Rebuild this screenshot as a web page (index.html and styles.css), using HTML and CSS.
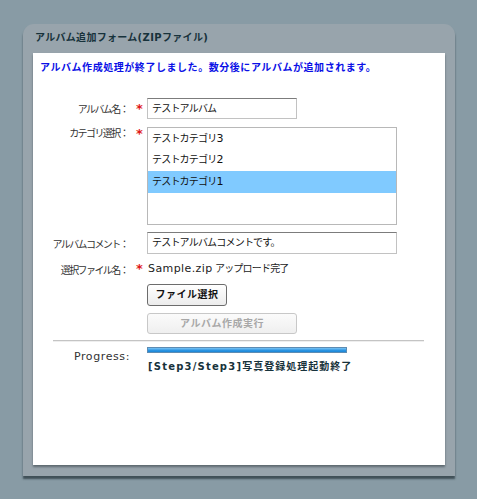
FILE: index.html
```html
<!DOCTYPE html>
<html lang="ja">
<head>
<meta charset="utf-8">
<link rel="stylesheet" href="styles.css">
</head>
<body>
<div class="panel">
  <div class="panel-title">アルバム追加フォーム(<span class="lat">ZIP</span>ファイル)</div>
  <div class="content">
    <div class="message">アルバム作成処理が終了しました。数分後にアルバムが追加されます。</div>
    <div class="form">
      <div class="label mid">アルバム名：</div>
      <div class="star mid">*</div>
      <div class="field"><div class="input short">テストアルバム</div></div>

      <div class="label top">カテゴリ選択：</div>
      <div class="star top">*</div>
      <div class="field">
        <div class="listbox">
          <div class="option">テストカテゴリ<span class="lat">3</span></div>
          <div class="option">テストカテゴリ<span class="lat">2</span></div>
          <div class="option selected">テストカテゴリ<span class="lat">1</span></div>
        </div>
      </div>

      <div class="label mid">アルバムコメント：</div>
      <div class="star mid"></div>
      <div class="field"><div class="input long">テストアルバムコメントです。</div></div>

      <div class="label mid">選択ファイル名：</div>
      <div class="star mid">*</div>
      <div class="field filetext"><span class="lat">Sample.zip</span> アップロード完了</div>

      <div class="label"></div>
      <div class="star"></div>
      <div class="field"><div class="btn">ファイル選択</div></div>

      <div class="label"></div>
      <div class="star"></div>
      <div class="field"><div class="btn disabled">アルバム作成実行</div></div>
    </div>
    <div class="divider"></div>
    <div class="progress-row">
      <div class="plabel">Progress:</div>
      <div class="pfield">
        <div class="bar"></div>
        <div class="step"><span class="lat">[Step3/Step3]</span>写真登録処理起動終了</div>
      </div>
    </div>
  </div>
</div>
</body>
</html>
```
FILE: styles.css
```css
html, body {
  margin: 0;
  padding: 0;
}
body {
  background: #889ba5;
  font-family: "DejaVu Sans", "Noto Sans CJK JP", sans-serif;
  font-size: 10px;
  color: #222;
  padding: 24px 22px 0 23px;
  height: 499px;
  box-sizing: border-box;
}
.lat {
  font-size: 11px;
  letter-spacing: 0.4px;
}
.panel {
  width: 432px;
  height: 452px;
  box-sizing: border-box;
  background: #98a4ac;
  border-radius: 11px 11px 0 0;
  padding: 0 10px 11px 10px;
  box-shadow: 0 3px 2px rgba(40, 55, 62, 0.75);
  display: flex;
  flex-direction: column;
}
.panel-title {
  height: 29px;
  line-height: 28px;
  padding-left: 2px;
  font-weight: bold;
  color: #17323b;
  font-size: 10px;
  letter-spacing: 0.3px;
}
.panel-title .lat {
  font-size: 10px;
}
.content {
  flex: 1;
  background: #fff;
  box-shadow: 0 2px 2px rgba(70, 80, 86, 0.7);
  padding: 8px 0 0 0;
}
.message {
  color: #0a10e6;
  font-weight: bold;
  padding-left: 7px;
  line-height: 14px;
  letter-spacing: 0.55px;
}
.form {
  margin-top: 23px;
  display: grid;
  grid-template-columns: 97px 17px 1fr;
  row-gap: 7px;
}
.label {
  text-align: right;
  color: #333;
  white-space: nowrap;
  letter-spacing: -1.6px;
  padding-right: 2px;
}
.label.mid, .star.mid {
  align-self: center;
}
.label.top, .star.top {
  line-height: 16px;
}
.star {
  color: #e01818;
  text-align: center;
  font-size: 13px;
  font-weight: bold;
  line-height: 16px;
  padding-left: 2px;
}
.field {
  min-width: 0;
  letter-spacing: -0.8px;
}
.input {
  box-sizing: border-box;
  height: 21px;
  border: 1px solid #c2c2c2;
  border-top-color: #7c7c7c;
  padding: 0 4px;
  line-height: 19px;
  color: #111;
}
.input.short { width: 150px; }
.input.long { width: 250px; height: 22px; line-height: 20px; }
.listbox {
  box-sizing: border-box;
  width: 250px;
  height: 98px;
  border: 1px solid #b8b8b8;
  margin-top: 1px;
}
.option {
  height: 22px;
  line-height: 21px;
  padding-left: 4px;
  color: #111;
}
.option:first-child { height: 21px; }
.option.selected {
  background: #80caff;
}
.filetext {
  height: 16px;
  line-height: 16px;
  color: #222;
  padding-left: 1px;
}
.btn {
  box-sizing: border-box;
  width: 80px;
  height: 22px;
  border: 1px solid #6c6c6c;
  border-radius: 3px;
  background: linear-gradient(#ffffff, #ececec);
  text-align: center;
  line-height: 20px;
  font-weight: bold;
  color: #111;
  letter-spacing: 0.5px;
}
.btn.disabled {
  width: 150px;
  height: 21px;
  line-height: 19px;
  border-color: #c8c8c8;
  color: #a8a8a8;
  background: linear-gradient(#fbfbfb, #efefef);
}
.divider {
  margin: 6px 0 0 20px;
  width: 371px;
  height: 1px;
  background: #c4c4c4;
  border-bottom: 1px solid #eee;
}
.progress-row {
  display: grid;
  grid-template-columns: 97px 17px 1fr;
  margin-top: 5px;
}
.plabel {
  grid-column: 1;
  text-align: right;
  padding-top: 2px;
  color: #333;
  line-height: 16px;
  font-size: 11px;
  letter-spacing: 0.6px;
}
.pfield {
  grid-column: 3;
}
.bar {
  width: 200px;
  height: 6px;
  box-sizing: border-box;
  border: 1px solid #5d8cb3;
  background: linear-gradient(#7cc4f4, #2a94e2 60%, #1c86d6);
}
.step {
  margin-top: 7px;
  font-weight: bold;
  color: #17323b;
  line-height: 14px;
  padding-left: 1px;
  letter-spacing: 1px;
}
.step .lat {
  font-size: 10px;
  letter-spacing: 1.2px;
}
```
